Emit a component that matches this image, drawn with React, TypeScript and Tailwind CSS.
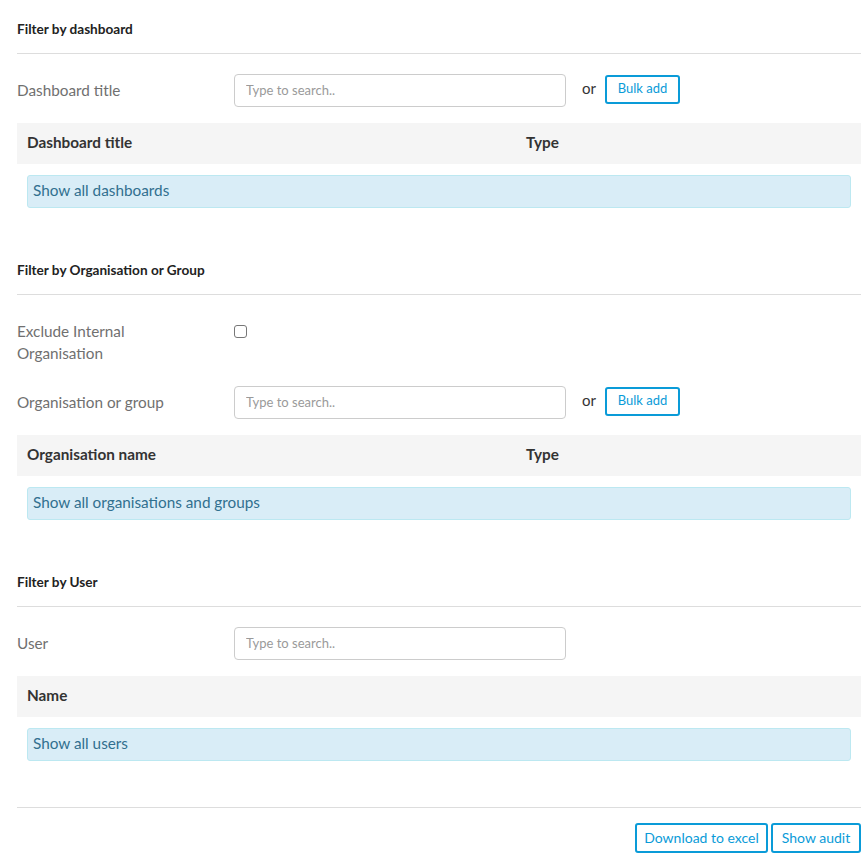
const font = { fontFamily: "Lato, 'Noto Sans', sans-serif" };

function Heading({ children }: { children: string }) {
  return (
    <div className="border-b border-[#dddddd] pt-[20px] pb-[15px]">
      <h3 className="text-[13.6px] leading-[18px] font-bold text-[#222222]">{children}</h3>
    </div>
  );
}

function SearchRow({ label, bulk = true }: { label: string; bulk?: boolean }) {
  return (
    <div className="flex items-center">
      <label className="w-[217px] text-[15.3px] text-[#707070]">{label}</label>
      <input
        type="text"
        placeholder="Type to search.."
        className="w-[332px] h-[33px] rounded-[4px] border border-[#cccccc] px-[11px] pb-[1px] text-[13px] text-[#333333] placeholder:text-[#9a9a9a] outline-none"
      />
      {bulk && (
        <>
          <span className="ml-[16px] text-[15px] text-[#333333] -mt-[4px]">or</span>
          <button className="ml-[9px] -mt-[3px] h-[29px] w-[75px] rounded-[3px] border-2 border-[#0a9bd8] text-[13px] text-[#0a9bd8]">
            Bulk add
          </button>
        </>
      )}
    </div>
  );
}

function ResultTable({ cols, empty }: { cols: string[]; empty: string }) {
  return (
    <div className="mt-[16px]">
      <div className="flex h-[41px] items-center bg-[#f5f5f5] px-[10px] pb-[2px] text-[15.3px] font-bold text-[#333333]">
        <div className="w-[499px]">{cols[0]}</div>
        {cols[1] && <div>{cols[1]}</div>}
      </div>
      <div className="mx-[10px] mt-[11px] flex h-[33px] items-center rounded-[3px] border border-[#bce8f1] bg-[#d9edf7] px-[5px] pb-[3px] text-[15.3px] text-[#31708f]">
        {empty}
      </div>
    </div>
  );
}

export default function App() {
  return (
    <div className="bg-white pl-[17px] pr-[4px]" style={font}>
      <section>
        <Heading>Filter by dashboard</Heading>
        <div className="mt-[20px]">
          <SearchRow label="Dashboard title" />
        </div>
        <ResultTable cols={["Dashboard title", "Type"]} empty="Show all dashboards" />
      </section>

      <section className="mt-[33px]">
        <Heading>Filter by Organisation or Group</Heading>
        <div className="mt-[20px] flex items-start pt-[5px]">
          <label className="w-[217px] pr-[80px] text-[15.3px] leading-[22px] text-[#707070]">
            Exclude Internal Organisation
          </label>
          <input type="checkbox" className="mt-[5px] h-[13px] w-[13px] appearance-none rounded-[3px] border border-[#777777] bg-white" />
        </div>
        <div className="mt-[22px]">
          <SearchRow label="Organisation or group" />
        </div>
        <ResultTable cols={["Organisation name", "Type"]} empty="Show all organisations and groups" />
      </section>

      <section className="mt-[33px]">
        <Heading>Filter by User</Heading>
        <div className="mt-[20px]">
          <SearchRow label="User" bulk={false} />
        </div>
        <ResultTable cols={["Name"]} empty="Show all users" />
      </section>

      <div className="mt-[46px] border-t border-[#dddddd] pt-[15px] pb-[3px] flex justify-end gap-[3px]">
        <button className="h-[30px] w-[133px] rounded-[3px] border-2 border-[#0a9bd8] pb-[2px] text-[14px] text-[#0a9bd8]">
          Download to excel
        </button>
        <button className="h-[30px] w-[90px] rounded-[3px] border-2 border-[#0a9bd8] pb-[2px] text-[14px] text-[#0a9bd8]">
          Show audit
        </button>
      </div>
    </div>
  );
}
